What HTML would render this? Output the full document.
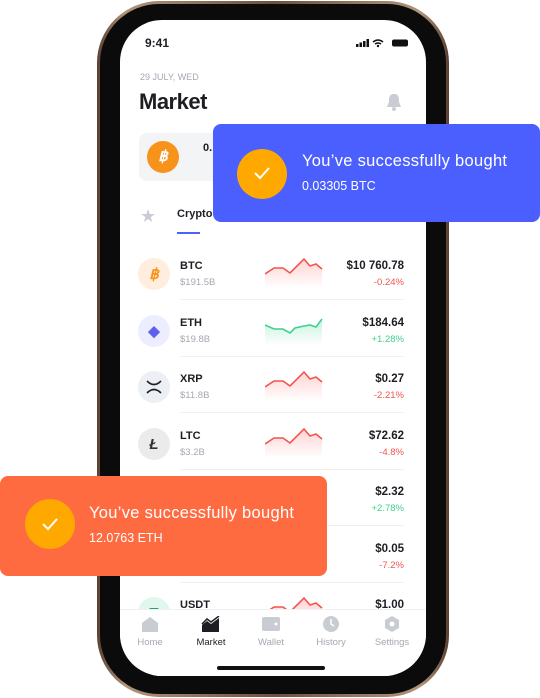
<!DOCTYPE html>
<html><head><meta charset="utf-8"><style>
*{margin:0;padding:0;box-sizing:border-box}
body{width:540px;height:698px;background:#fff;position:relative;overflow:hidden;font-family:"Liberation Sans",sans-serif}
.phone{position:absolute;left:97px;top:1px;width:352px;height:696px;border-radius:62px;background:linear-gradient(90deg,#5a4030,#b0957a 8%,#6b5240 50%,#b0957a 92%,#5a4030);padding:3px}
.inner{width:100%;height:100%;border-radius:59px;background:#0b0b0b;position:relative}
.screen{position:absolute;left:20px;top:16px;width:306px;height:656px;border-radius:42px;background:#fff;overflow:hidden}
.abs{position:absolute}
.row{position:absolute;left:0;width:306px;height:56px}
.ic{position:absolute;left:18px;top:14px;width:32px;height:32px;border-radius:50%;display:flex;align-items:center;justify-content:center;font-weight:bold;font-size:15px}
.nm{position:absolute;left:60px;top:16px;font-size:11px;font-weight:bold;color:#1d1e24}
.cap{position:absolute;left:60px;top:33px;font-size:9.5px;color:#a4a8b0}
.pr{position:absolute;right:22px;top:16px;font-size:11.5px;font-weight:bold;color:#1d1e24}
.ch{position:absolute;right:22px;top:33px;font-size:9.5px}
.sep{position:absolute;left:60px;right:22px;bottom:0;height:1px;background:#eef0f3}
.sp{position:absolute;left:145px;top:10px}
.toast{position:absolute;border-radius:8px;color:#fff;white-space:nowrap}
.chk{position:absolute;width:50px;height:50px;border-radius:50%;background:#ffa800}
.t1{position:absolute;font-size:16.5px;letter-spacing:0.3px}
.t2{position:absolute;font-size:12.5px}
.tab{position:absolute;top:617px;font-size:9.5px;color:#a4a8b0;width:60px;text-align:center}
</style></head><body>
<div class="phone"><div class="inner"><div class="screen">
<div class="abs" style="left:25px;top:16px;font-size:12px;font-weight:bold;color:#1d1e24">9:41</div>
<svg class="abs" style="left:236px;top:18px" width="56" height="10"><rect x="0" y="6" width="2.5" height="3" fill="#111"/><rect x="3.5" y="4.5" width="2.5" height="4.5" fill="#111"/><rect x="7" y="3" width="2.5" height="6" fill="#111"/><rect x="10.5" y="1" width="2.5" height="8" fill="#111"/><path d="M17 4 Q22 0 27 4 M19 6 Q22 4 25 6" stroke="#111" stroke-width="1.5" fill="none"/><circle cx="22" cy="8" r="1.2" fill="#111"/><rect x="36" y="1.5" width="16" height="7" rx="2" fill="#111"/></svg>
<div class="abs" style="left:20px;top:52px;font-size:9px;color:#a4a8b0">29 JULY, WED</div>
<div class="abs" style="left:19px;top:69px;font-size:22px;font-weight:bold;color:#1d1e24;letter-spacing:-0.5px">Market</div>
<svg class="abs" style="left:265px;top:72px" width="18" height="20"><path d="M9 2 C4 2 4 6 4 10 L2 15 L16 15 L14 10 C14 6 14 2 9 2Z" fill="#c9ccd3"/><circle cx="9" cy="17" r="2" fill="#c9ccd3"/></svg>
<div class="abs" style="left:19px;top:113px;width:280px;height:48px;border-radius:8px;background:#f3f4f6"></div>
<div class="abs" style="left:27px;top:121px;width:32px;height:32px;border-radius:50%;background:#f7931a;color:#fff;font-weight:bold;font-size:15px;text-align:center;line-height:32px;font-style:italic">฿</div>
<div class="abs" style="left:83px;top:122px;font-size:11px;font-weight:bold;color:#1d1e24">0.</div>
<div class="abs" style="left:20px;top:186px;font-size:18px;color:#c9ccd3">★</div>
<div class="abs" style="left:57px;top:188px;font-size:11px;font-weight:bold;color:#1d1e24">Crypto</div>
<div class="abs" style="left:57px;top:212px;width:23px;height:2px;background:#4a62ff"></div>

<div class="row" style="top:224px"><div class="ic" style="background:#ffeedd;color:#f7931a;font-style:italic">฿</div><div class="nm">BTC</div><div class="cap">$191.5B</div>
<svg class="sp" width="60" height="34"><defs><linearGradient id="r" x1="0" y1="0" x2="0" y2="1"><stop offset="0" stop-color="#ff6b6b" stop-opacity=".3"/><stop offset="1" stop-color="#ff6b6b" stop-opacity="0"/></linearGradient><linearGradient id="g" x1="0" y1="0" x2="0" y2="1"><stop offset="0" stop-color="#3fd18e" stop-opacity=".3"/><stop offset="1" stop-color="#3fd18e" stop-opacity="0"/></linearGradient></defs><path d="M0 20 L9 14 L18 14 L25 19 L39 5 L45 12 L51 10 L57 15 L57 34 L0 34Z" fill="url(#r)"/><path d="M0 20 L9 14 L18 14 L25 19 L39 5 L45 12 L51 10 L57 15" stroke="#f2544f" stroke-width="1.6" fill="none"/></svg>
<div class="pr">$10 760.78</div><div class="ch" style="color:#f2544f">-0.24%</div><div class="sep"></div></div>

<div class="row" style="top:281px"><div class="ic" style="background:#eceeff;color:#5d5fef">◆</div><div class="nm">ETH</div><div class="cap">$19.8B</div>
<svg class="sp" width="60" height="34"><path d="M0 14 L9 18 L18 18 L25 22 L30 17 L39 15 L45 14 L51 16 L57 8 L57 34 L0 34Z" fill="url(#g)"/><path d="M0 14 L9 18 L18 18 L25 22 L30 17 L39 15 L45 14 L51 16 L57 8" stroke="#3fd18e" stroke-width="1.6" fill="none"/></svg>
<div class="pr">$184.64</div><div class="ch" style="color:#3fd18e">+1.28%</div><div class="sep"></div></div>

<div class="row" style="top:337px"><div class="ic" style="background:#eceff3;color:#222"><svg width="16" height="14"><path d="M1 1 Q8 8 15 1 M1 13 Q8 6 15 13" stroke="#222" stroke-width="1.6" fill="none"/></svg></div><div class="nm">XRP</div><div class="cap">$11.8B</div>
<svg class="sp" width="60" height="34"><path d="M0 20 L9 14 L18 14 L25 19 L39 5 L45 12 L51 10 L57 15 L57 34 L0 34Z" fill="url(#r)"/><path d="M0 20 L9 14 L18 14 L25 19 L39 5 L45 12 L51 10 L57 15" stroke="#f2544f" stroke-width="1.6" fill="none"/></svg>
<div class="pr">$0.27</div><div class="ch" style="color:#f2544f">-2.21%</div><div class="sep"></div></div>

<div class="row" style="top:394px"><div class="ic" style="background:#ebebeb;color:#333;font-style:italic">Ł</div><div class="nm">LTC</div><div class="cap">$3.2B</div>
<svg class="sp" width="60" height="34"><path d="M0 20 L9 14 L18 14 L25 19 L39 5 L45 12 L51 10 L57 15 L57 34 L0 34Z" fill="url(#r)"/><path d="M0 20 L9 14 L18 14 L25 19 L39 5 L45 12 L51 10 L57 15" stroke="#f2544f" stroke-width="1.6" fill="none"/></svg>
<div class="pr">$72.62</div><div class="ch" style="color:#f2544f">-4.8%</div><div class="sep"></div></div>

<div class="row" style="top:450px"><div class="pr">$2.32</div><div class="ch" style="color:#3fd18e">+2.78%</div><div class="sep"></div></div>
<div class="row" style="top:507px"><div class="pr">$0.05</div><div class="ch" style="color:#f2544f">-7.2%</div><div class="sep"></div></div>
<div class="row" style="top:563px"><div class="ic" style="background:#dff7ec;color:#26a17b">T</div><div class="nm">USDT</div>
<svg class="sp" width="60" height="34"><path d="M0 20 L9 14 L18 14 L25 19 L39 5 L45 12 L51 10 L57 15 L57 34 L0 34Z" fill="url(#r)"/><path d="M0 20 L9 14 L18 14 L25 19 L39 5 L45 12 L51 10 L57 15" stroke="#f2544f" stroke-width="1.6" fill="none"/></svg>
<div class="pr">$1.00</div></div>

<div class="abs" style="left:0;top:589px;width:306px;height:67px;background:#fff;border-top:1px solid #f0f1f3"></div>
<svg class="abs" style="left:21px;top:596px" width="18" height="16"><path d="M1 7 L9 1 L17 7 L17 16 L1 16Z" fill="#c9ccd3"/></svg>
<svg class="abs" style="left:81px;top:596px" width="20" height="16"><path d="M1 9 L6 5 L10 8 L18 2 L18 16 L1 16Z" fill="#1d1e24"/><path d="M1 8 L6 3 L10 6 L18 0" stroke="#1d1e24" stroke-width="1.5" fill="none"/></svg>
<svg class="abs" style="left:141px;top:596px" width="20" height="16"><rect x="1" y="1" width="18" height="14" rx="2" fill="#c9ccd3"/><circle cx="15" cy="8" r="1.5" fill="#fff"/></svg>
<svg class="abs" style="left:202px;top:595px" width="18" height="18"><circle cx="9" cy="9" r="8" fill="#c9ccd3"/><path d="M9 4 L9 9 L12 11" stroke="#fff" stroke-width="1.5" fill="none"/></svg>
<svg class="abs" style="left:263px;top:595px" width="18" height="18"><path d="M9 1 L16 5 L16 13 L9 17 L2 13 L2 5Z" fill="#c9ccd3"/><circle cx="9" cy="9" r="2.5" fill="#fff"/></svg>
<div class="tab" style="left:0">Home</div>
<div class="tab" style="left:61px;color:#1d1e24">Market</div>
<div class="tab" style="left:121px">Wallet</div>
<div class="tab" style="left:181px">History</div>
<div class="tab" style="left:242px">Settings</div>
<div class="abs" style="left:97px;top:646px;width:108px;height:4px;border-radius:2px;background:#111"></div>
</div></div></div>

<div class="toast" style="left:213px;top:124px;width:327px;height:98px;background:#4a5ffd">
<div class="chk" style="left:24px;top:25px"></div>
<svg class="abs" style="left:40px;top:42px" width="18" height="14"><path d="M2 7 L7 12 L16 2" stroke="#fff" stroke-width="2" fill="none"/></svg>
<div class="t1" style="left:89px;top:28px">You’ve successfully bought</div>
<div class="t2" style="left:89px;top:55px">0.03305 BTC</div></div>

<div class="toast" style="left:0;top:476px;width:327px;height:100px;background:#ff6b41">
<div class="chk" style="left:25px;top:23px"></div>
<svg class="abs" style="left:41px;top:41px" width="18" height="14"><path d="M2 7 L7 12 L16 2" stroke="#fff" stroke-width="2" fill="none"/></svg>
<div class="t1" style="left:89px;top:28px">You’ve successfully bought</div>
<div class="t2" style="left:89px;top:55px">12.0763 ETH</div></div>
</body></html>
